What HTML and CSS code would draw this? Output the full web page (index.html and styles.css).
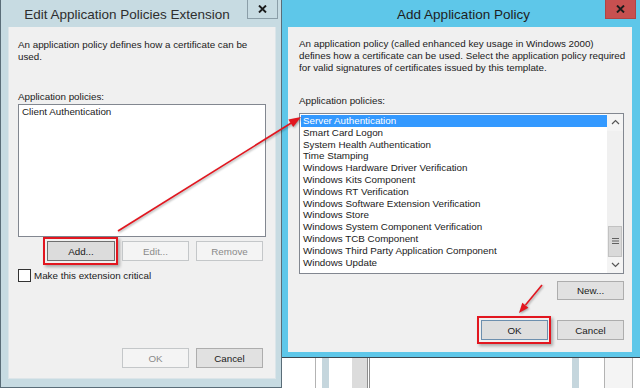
FILE: index.html
```html
<!DOCTYPE html>
<html lang="en">
<head>
    <meta charset="UTF-8">
    <meta name="viewport" content="width=device-width, initial-scale=1.0">
    <title>Application Policies</title>
    <link rel="stylesheet" href="styles.css">
</head>
<body>
    <div class="desk">
        <!-- Dialog behind: Edit Application Policies Extension -->
        <div class="dialog dialog-back">
            <div class="titlebar">
                <span class="title">Edit Application Policies Extension</span>
                <span class="close">
                    <svg width="9" height="8" viewBox="0 0 9 8"><path d="M1 0.5 L8 7.5 M8 0.5 L1 7.5" stroke="#1c1c1c" stroke-width="1.9"/></svg>
                </span>
            </div>
            <div class="client">
                <p class="intro">An application policy defines how a certificate can be<br>used.</p>
                <div class="caption">Application policies:</div>
                <div class="listbox small-list">
                    <div class="item">Client Authentication</div>
                </div>
                <div class="btn-row">
                    <button class="btn btn-default marked">Add...</button>
                    <button class="btn" disabled>Edit...</button>
                    <button class="btn" disabled>Remove</button>
                </div>
                <label class="check">
                    <span class="box"></span>
                    <span>Make this extension critical</span>
                </label>
                <div class="btn-row footer">
                    <button class="btn" disabled>OK</button>
                    <button class="btn">Cancel</button>
                </div>
            </div>
        </div>

        <div class="right-col">
            <!-- Active dialog: Add Application Policy -->
            <div class="dialog dialog-front">
                <div class="titlebar">
                    <span class="title">Add Application Policy</span>
                    <span class="close close-red">
                        <svg width="9" height="8" viewBox="0 0 9 8"><path d="M1 0.5 L8 7.5 M8 0.5 L1 7.5" stroke="#1c1c1c" stroke-width="1.9"/></svg>
                    </span>
                </div>
                <div class="client">
                    <p class="intro">An application policy (called enhanced key usage in Windows 2000)<br>defines how a certificate can be used. Select the application policy required<br>for valid signatures of certificates issued by this template.</p>
                    <div class="caption">Application policies:</div>
                    <div class="listbox big-list">
                        <div class="items">
                            <div class="item selected">Server Authentication</div>
                            <div class="item">Smart Card Logon</div>
                            <div class="item">System Health Authentication</div>
                            <div class="item">Time Stamping</div>
                            <div class="item">Windows Hardware Driver Verification</div>
                            <div class="item">Windows Kits Component</div>
                            <div class="item">Windows RT Verification</div>
                            <div class="item">Windows Software Extension Verification</div>
                            <div class="item">Windows Store</div>
                            <div class="item">Windows System Component Verification</div>
                            <div class="item">Windows TCB Component</div>
                            <div class="item">Windows Third Party Application Component</div>
                            <div class="item">Windows Update</div>
                        </div>
                        <div class="scrollbar">
                            <div class="sb-btn">
                                <svg width="9" height="6" viewBox="0 0 9 6"><path d="M1 5 L4.5 1.5 L8 5" fill="none" stroke="#555" stroke-width="1.2"/></svg>
                            </div>
                            <div class="sb-track">
                                <div class="sb-thumb">
                                    <svg width="7" height="6" viewBox="0 0 7 6"><path d="M0 0.5 H7 M0 3 H7 M0 5.5 H7" stroke="#606060" stroke-width="1"/></svg>
                                </div>
                            </div>
                            <div class="sb-btn">
                                <svg width="9" height="6" viewBox="0 0 9 6"><path d="M1 1 L4.5 4.5 L8 1" fill="none" stroke="#555" stroke-width="1.2"/></svg>
                            </div>
                        </div>
                    </div>
                    <div class="btn-row new-row">
                        <button class="btn">New...</button>
                    </div>
                    <div class="btn-row footer wide-gap">
                        <button class="btn btn-focus marked">OK</button>
                        <button class="btn">Cancel</button>
                    </div>
                </div>
            </div>
            <!-- windows further behind -->
            <div class="backdrop">
                <span class="strip line" style="margin-left: 33px"></span>
                <span class="strip pale" style="margin-left: 6px; width: 7px"></span>
                <span class="strip grey" style="margin-left: 23px; width: 15px"></span>
                <span class="strip line dark" style="margin-left: 0"></span>
                <span class="strip line dark" style="margin-left: 1px"></span>
                <span class="strip pale" style="margin-left: 202px; width: 7px"></span>
                <span class="strip line" style="margin-left: 25px"></span>
                <span class="strip light" style="width: 27px"></span>
                <span class="strip line"></span>
            </div>
        </div>

        <!-- red annotation arrows -->
        <svg class="arrows" width="640" height="388" viewBox="0 0 640 388">
            <g class="arrow">
                <line x1="118" y1="231" x2="292" y2="122.5" />
                <polygon points="301,117 293.2,127.1 288.4,119.5" />
            </g>
            <g class="arrow">
                <line x1="542" y1="285" x2="525.5" y2="305" />
                <polygon points="519,313 528.4,307.8 522.3,302.7" />
            </g>
        </svg>
    </div>
</body>
</html>
```

FILE: styles.css
```css
* { box-sizing: border-box; }

body {
    margin: 0;
    width: 640px;
    height: 388px;
    overflow: hidden;
    background: #fff;
    font-family: "Liberation Sans", Arial, sans-serif;
    font-size: 9.8px;
    color: #1a1a1a;
}

.desk {
    position: relative;
    display: flex;
    height: 388px;
}

/* window frames */
.dialog {
    display: flex;
    flex-direction: column;
}
.dialog-back {
    width: 282px;
    height: 388px;
    background: #c7dbe2;
    border: 1px solid #5a6d78;
    border-top: none;
    padding: 0 5px 8px 7px;
}
.right-col {
    display: flex;
    flex-direction: column;
    width: 358px;
}
.dialog-front {
    height: 358px;
    background: #5ec7e9;
    border-bottom: 1px solid #3b4750;
    padding: 0 8px 5px 6px;
}

.titlebar {
    display: flex;
    align-items: flex-start;
    height: 27px;
    flex-shrink: 0;
}
.title {
    flex: 1;
    text-align: center;
    font-size: 13.5px;
    line-height: 30px;
    color: #2e2e2e;
}
.dialog-back .titlebar { margin-right: -2px; }
.dialog-back .title { padding-left: 1px; }
.dialog-front .titlebar { margin-right: -4px; }
.dialog-front .title { padding-left: 36px; color: #1e1e1e; }

.close {
    display: flex;
    align-items: center;
    justify-content: center;
    width: 31px;
    height: 19px;
    margin-left: 2px;
    border: 1px solid #8b9ea8;
    border-top: none;
}
.close-red {
    background: #c75050;
    border-color: #b04444;
}

.client {
    flex: 1;
    display: flex;
    flex-direction: column;
    background: #f0f0f0;
}
.dialog-back .client {
    padding: 12px 9px 10px 9px;
    border: 1px solid #dce5e9;
    border-top: none;
}
.dialog-front .client {
    padding: 11px 8px 12px 11px;
}

.intro {
    margin: 0;
    line-height: 12px;
    white-space: nowrap;
}
.caption {
    line-height: 12px;
    margin-top: 28px;
}
.dialog-front .caption { margin-top: 21px; }

/* list boxes */
.listbox {
    background: #fff;
    border: 1px solid #828790;
    margin-top: 1px;
}
.small-list {
    height: 133px;
    padding: 1px 2px;
}
.big-list {
    display: flex;
    height: 161px;
    margin-top: 6px;
}
.item {
    line-height: 11px;
    padding-left: 1px;
    white-space: nowrap;
}
.items {
    flex: 1;
    padding: 1px 0 0 1px;
}
.big-list .item {
    line-height: 11.8px;
    padding-left: 2px;
}
.item.selected {
    background: #3399ff;
    color: #fff;
}

.scrollbar {
    width: 16px;
    display: flex;
    flex-direction: column;
    background: #f0f0f0;
}
.sb-btn {
    height: 17px;
    display: flex;
    align-items: center;
    justify-content: center;
    background: #f4f4f4;
}
.sb-track { flex: 1; }
.sb-thumb {
    margin: 95px 1px 0 1px;
    height: 31px;
    background: #d9d9d9;
    border: 1px solid #c2c2c2;
    display: flex;
    align-items: center;
    justify-content: center;
}

/* buttons */
.btn-row {
    display: flex;
    justify-content: flex-end;
    gap: 7px;
    margin-top: 4px;
    margin-right: 3px;
}
.new-row {
    margin-top: 7px;
    margin-right: 0;
}
.footer { margin-top: auto; }
.wide-gap {
    gap: 9px;
    margin-right: 0;
}

.btn {
    position: relative;
    width: 67px;
    height: 20px;
    padding: 0;
    font-family: inherit;
    font-size: 9.8px;
    color: #1a1a1a;
    background: #e1e1e1;
    border: 1px solid #adadad;
}
.new-row .btn { height: 19px; }
.btn-default {
    width: 68px;
    background: #dcdcdc;
    border-color: #6f6f6f;
}
.btn-focus {
    background: #dedede;
    border-color: #6d8fae;
}
.btn:disabled {
    background: #f4f4f4;
    border-color: #c4c7c9;
    color: #8a8a8a;
}
.marked::after {
    content: "";
    position: absolute;
    inset: -5px -4px -5px -5px;
    border: 2px solid #e2161f;
    box-shadow: 2px 2px 3px rgba(0, 0, 0, 0.3);
}

.check {
    display: flex;
    align-items: center;
    gap: 3px;
    margin-top: 8px;
    line-height: 13px;
}
.box {
    width: 13px;
    height: 13px;
    background: #fff;
    border: 1px solid #333;
}

/* windows behind, under the active dialog */
.backdrop {
    flex: 1;
    display: flex;
    background: #fff;
}
.strip {
    display: block;
    width: 1px;
}
.strip.line { background: #b3b3b3; }
.strip.dark { background: #8e8e8e; }
.strip.pale { background: #c5d6dd; }
.strip.grey { background: #dcdcdc; }
.strip.light { background: #f4f4f4; }

/* annotations */
.arrows {
    position: absolute;
    left: 0;
    top: 0;
    pointer-events: none;
}
.arrow {
    filter: drop-shadow(1px 1px 1px rgba(0, 0, 0, 0.35));
}
.arrow line {
    stroke: #e2161f;
    stroke-width: 1.6;
}
.arrow polygon {
    fill: #e2161f;
}
```
